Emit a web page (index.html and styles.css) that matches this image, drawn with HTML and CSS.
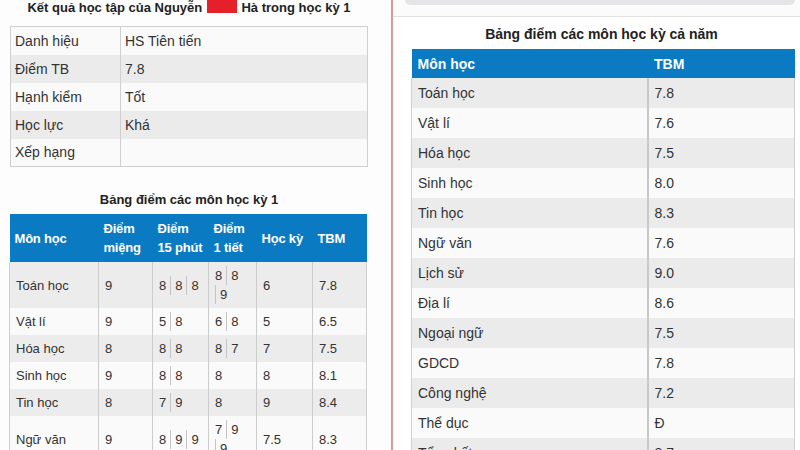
FILE: index.html
```html
<!DOCTYPE html>
<html lang="vi">
<head>
<meta charset="utf-8">
<title>Kết quả học tập</title>
<link rel="stylesheet" href="styles.css">
</head>
<body>
<div class="screen">
  <section class="left">
    <h1 class="title">Kết quả học tập của Nguyễn <span class="redact"></span> Hà trong học kỳ 1</h1>
    <table class="info">
      <colgroup><col class="ic1"><col></colgroup>
      <tr><td>Danh hiệu</td><td>HS Tiên tiến</td></tr>
      <tr class="alt"><td>Điểm TB</td><td>7.8</td></tr>
      <tr><td>Hạnh kiểm</td><td>Tốt</td></tr>
      <tr class="alt"><td>Học lực</td><td>Khá</td></tr>
      <tr><td>Xếp hạng</td><td></td></tr>
    </table>

    <h2 class="subtitle">Bảng điểm các môn học kỳ 1</h2>
    <table class="scores">
      <colgroup>
        <col class="sc1"><col class="sc2"><col class="sc3"><col class="sc4"><col class="sc5"><col>
      </colgroup>
      <thead>
        <tr><th>Môn học</th><th>Điểm miệng</th><th>Điểm 15&nbsp;phút</th><th>Điểm 1&nbsp;tiết</th><th>Học kỳ</th><th>TBM</th></tr>
      </thead>
      <tbody>
        <tr class="alt"><td>Toán học</td><td>9</td><td><span class="s">8</span><span class="s">8</span><span class="s">8</span></td><td><span class="s">8</span><span class="s">8</span><span class="s">9</span></td><td>6</td><td>7.8</td></tr>
        <tr><td>Vật lí</td><td>9</td><td><span class="s">5</span><span class="s">8</span></td><td><span class="s">6</span><span class="s">8</span></td><td>5</td><td>6.5</td></tr>
        <tr class="alt"><td>Hóa học</td><td>8</td><td><span class="s">8</span><span class="s">8</span></td><td><span class="s">8</span><span class="s">7</span></td><td>7</td><td>7.5</td></tr>
        <tr><td>Sinh học</td><td>9</td><td><span class="s">8</span><span class="s">8</span></td><td><span class="s">8</span></td><td>8</td><td>8.1</td></tr>
        <tr class="alt"><td>Tin học</td><td>8</td><td><span class="s">7</span><span class="s">9</span></td><td><span class="s">8</span></td><td>9</td><td>8.4</td></tr>
        <tr><td>Ngữ văn</td><td>9</td><td><span class="s">8</span><span class="s">9</span><span class="s">9</span></td><td><span class="s">7</span><span class="s">9</span><span class="s">9</span></td><td>7.5</td><td>8.3</td></tr>
      </tbody>
    </table>
  </section>

  <div class="divider"></div>

  <section class="right">
    <div class="topbar"><div class="search"></div></div>
    <h2 class="subtitle big">Bảng điểm các môn học kỳ cả năm</h2>
    <table class="year">
      <colgroup><col class="yc1"><col></colgroup>
      <thead><tr><th>Môn học</th><th>TBM</th></tr></thead>
      <tbody>
        <tr class="alt"><td>Toán học</td><td>7.8</td></tr>
        <tr><td>Vật lí</td><td>7.6</td></tr>
        <tr class="alt"><td>Hóa học</td><td>7.5</td></tr>
        <tr><td>Sinh học</td><td>8.0</td></tr>
        <tr class="alt"><td>Tin học</td><td>8.3</td></tr>
        <tr><td>Ngữ văn</td><td>7.6</td></tr>
        <tr class="alt"><td>Lịch sử</td><td>9.0</td></tr>
        <tr><td>Địa lí</td><td>8.6</td></tr>
        <tr class="alt"><td>Ngoại ngữ</td><td>7.5</td></tr>
        <tr><td>GDCD</td><td>7.8</td></tr>
        <tr class="alt"><td>Công nghệ</td><td>7.2</td></tr>
        <tr><td>Thể dục</td><td>Đ</td></tr>
        <tr class="alt"><td>Tổng kết</td><td>8.7</td></tr>
      </tbody>
    </table>
  </section>
</div>
</body>
</html>
```
FILE: styles.css
```css
* { box-sizing: border-box; }
html, body {
  margin: 0;
  padding: 0;
  background: #ffffff;
}
body {
  font-family: "Liberation Sans", Arial, sans-serif;
  color: #333333;
}
.screen {
  display: flex;
  width: 800px;
  height: 450px;
  overflow: hidden;
}
.left {
  width: 391px;
  flex: none;
  padding-left: 10px;
  background: #fdfdfd;
}
.divider {
  width: 2px;
  flex: none;
  background: #d99a9a;
}
.right {
  flex: 1;
  background: #ffffff;
  min-width: 0;
}

.title {
  margin: 0;
  width: 358px;
  text-align: center;
  font-size: 13px;
  line-height: 15px;
  font-weight: bold;
  color: #222;
}
.redact {
  display: inline-block;
  width: 30px;
  height: 13px;
  background: #e5202b;
  vertical-align: -1px;
  margin: 0 1px;
}

table {
  border-collapse: collapse;
  table-layout: fixed;
}
.info {
  width: 358px;
  margin-top: 11px;
  font-size: 14px;
  border: 1px solid #cfcfcf;
}
.info td {
  height: 28px;
  padding: 0 4px;
  border-right: 1px solid #cfcfcf;
  background: #fafafa;
}
.info .alt td { background: #ebebeb; }
.ic1 { width: 110px; }

.subtitle {
  margin: 24px 0 5px;
  width: 358px;
  text-align: center;
  font-size: 13px;
  line-height: 18px;
  font-weight: bold;
  color: #222;
}
.subtitle.big {
  width: auto;
  margin: 8px 0 6px;
  font-size: 14px;
  line-height: 18px;
  padding-left: 10px;
}

.scores {
  width: 358px;
  margin-left: -1px;
  font-size: 13px;
}
.sc1 { width: 89px; }
.sc2 { width: 54px; }
.sc3 { width: 56px; }
.sc4 { width: 48px; }
.sc5 { width: 56px; }
.scores th {
  background: #0a7bc2;
  color: #ffffff;
  text-align: left;
  font-weight: bold;
  padding: 5px 1px 5px 5px;
  line-height: 19px;
  height: 48px;
  vertical-align: middle;
  letter-spacing: -0.2px;
}
.scores td {
  padding: 4px 5px 4px 6px;
  line-height: 19px;
  vertical-align: middle;
  border-left: 1px solid #cccccc;
  background: #fafafa;
}
.scores td:first-child { border-left: 1px solid #cfcfcf; }
.scores td:last-child { border-right: 1px solid #cfcfcf; }
.scores .alt td { background: #ececec; }
.s {
  display: inline-block;
  padding: 0 4px;
}
.s:first-child { padding-left: 0; }
.s + .s { border-left: 1px solid #c4c4c4; }

.topbar {
  height: 17px;
  padding: 0 5px 0 12px;
  border-bottom: 1px solid #e2e2e2;
  background: #fbfbfb;
}
.search {
  height: 5px;
  background: #e5e5e8;
  border-radius: 0 0 6px 6px;
}

.year {
  width: 384px;
  margin-left: 18px;
  font-size: 14px;
}
.yc1 { width: 236px; }
.year th {
  background: #0a7bc2;
  color: #ffffff;
  text-align: left;
  font-weight: bold;
  height: 29px;
  padding: 0 6px;
  border-right: 1px solid #0a7bc2;
}
.year td {
  height: 30px;
  padding: 0 6px;
  background: #fafafa;
  border-left: 1px solid #d0d0d0;
  border-right: 1px solid #d0d0d0;
}
.year td + td { border-left: 2px solid #c8c8c8; }
.year .alt td { background: #ebebeb; }
```
